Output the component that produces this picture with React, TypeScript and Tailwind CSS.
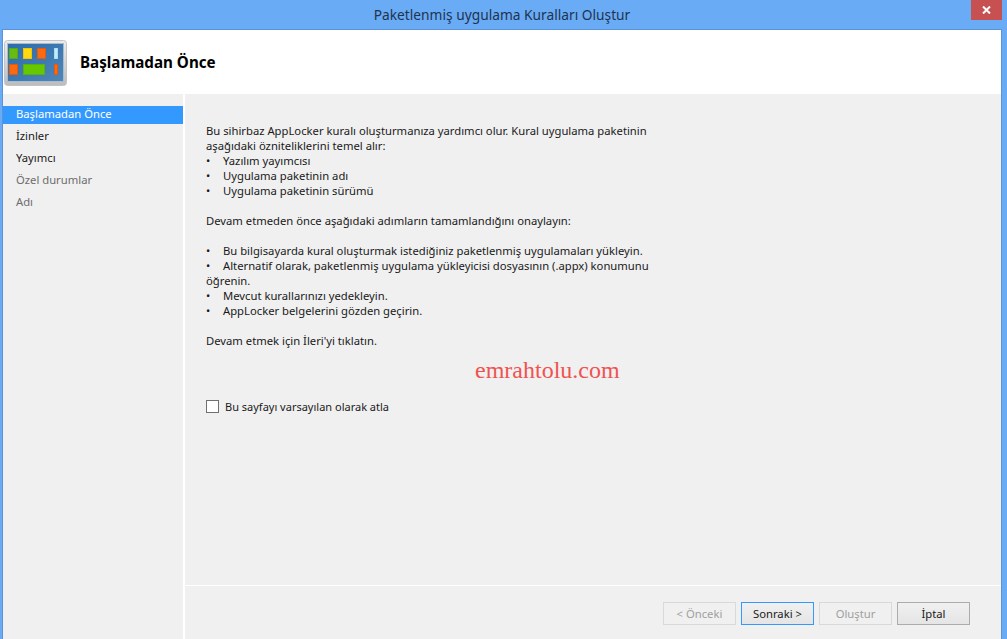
const font = { fontFamily: '"Noto Sans", sans-serif' };

function Tile({ x, y, w, h, fill, edge }: { x: number; y: number; w: number; h: number; fill: string; edge: string }) {
  return <rect x={x + 0.5} y={y + 0.5} width={w - 1} height={h - 1} fill={fill} stroke={edge} />;
}

function AppIcon() {
  return (
    <svg width="63" height="46" viewBox="0 0 63 46" className="shrink-0">
      <defs>
        <linearGradient id="frame" x1="0" y1="0" x2="0" y2="1">
          <stop offset="0" stopColor="#ececec" />
          <stop offset="1" stopColor="#bcbcbc" />
        </linearGradient>
        <linearGradient id="panel" x1="0" y1="0" x2="1" y2="1">
          <stop offset="0" stopColor="#2a6cab" />
          <stop offset="1" stopColor="#4f86b8" />
        </linearGradient>
      </defs>
      <rect x="0.5" y="0.5" width="62" height="45" rx="3" fill="url(#frame)" stroke="#c4c4c4" />
      <rect x="3.5" y="3.5" width="56" height="38" fill="url(#panel)" stroke="#a9bccd" />
      <Tile x={5} y={8} w={9} h={11} fill="#66bb14" edge="#5aa80f" />
      <Tile x={19} y={8} w={9} h={11} fill="#ffd90f" edge="#f2c400" />
      <Tile x={33} y={8} w={9} h={11} fill="#f96a12" edge="#e55a0a" />
      <Tile x={50} y={8} w={4} h={11} fill="#c4ebf9" edge="#a8dcf2" />
      <Tile x={5} y={24} w={9} h={11} fill="#f96a12" edge="#e55a0a" />
      <Tile x={19} y={24} w={22} h={11} fill="#66c800" edge="#5ab400" />
      <Tile x={50} y={24} w={4} h={11} fill="#f96a12" edge="#e55a0a" />
    </svg>
  );
}

function NavItem({ label, active, muted }: { label: string; active?: boolean; muted?: boolean }) {
  return (
    <div
      className={`pl-[13px] text-[11.25px] ${
        active
          ? "bg-[#3399ff] text-white h-[18px] leading-[16px] mb-[4px]"
          : muted
            ? "h-[22px] leading-[16px] text-[#6d6d6d]"
            : "h-[22px] leading-[16px] text-[#1a1a1a]"
      }`}
    >
      {label}
    </div>
  );
}

function WizButton({ label, state }: { label: string; state: "disabled" | "primary" | "normal" }) {
  const cls =
    state === "disabled"
      ? "border-[#d9d9d9] bg-[#f0f0f0] text-[#a0a0a0]"
      : state === "primary"
        ? "border-[#3399ff] bg-linear-to-b from-[#f0f0f0] to-[#e5e5e5] text-[#1a1a1a]"
        : "border-[#acacac] bg-linear-to-b from-[#f0f0f0] to-[#e5e5e5] text-[#1a1a1a]";
  return (
    <div className={`w-[73px] h-[23px] border flex items-center justify-center text-[11.25px] pt-[1px] ${cls}`}>
      {label}
    </div>
  );
}

function Bullet({ children }: { children: string }) {
  return (
    <div className="flex">
      <span className="w-[17px] shrink-0">•</span>
      <span>{children}</span>
    </div>
  );
}

export default function App() {
  return (
    <div style={font} className="w-[1007px] h-[639px] overflow-hidden bg-[#6aabf5] flex flex-col">
      {/* title bar */}
      <div className="h-[29px] shrink-0 flex items-start">
        <div className="flex-1 text-center text-[13.75px] leading-[29px] text-[#1f3350] pl-[33px]">
          Paketlenmiş uygulama Kuralları Oluştur
        </div>
        <div className="w-[31px] h-[20px] mr-[5px] bg-[#c75050] flex items-center justify-center">
          <svg width="9" height="8" viewBox="0 0 9 8">
            <path d="M1 0.5 L8 7.5 M8 0.5 L1 7.5" stroke="#fff" strokeWidth="2" />
          </svg>
        </div>
      </div>

      {/* window body */}
      <div className="flex-1 ml-[2px] mr-[5px] border-t border-l border-r border-[#5b93d6] bg-white flex flex-col min-h-0">
        <div className="h-[64px] shrink-0 bg-white flex items-start">
          <div className="ml-[1px] mt-[10px]">
            <AppIcon />
          </div>
          <div className="ml-[13px] mt-[22px] leading-[20px] font-bold text-[15.2px] text-black">Başlamadan Önce</div>
        </div>

        <div className="flex-1 flex min-h-0">
          {/* sidebar */}
          <div className="w-[180px] shrink-0 bg-[#f0f0f0] pt-[12px]">
            <NavItem label="Başlamadan Önce" active />
            <NavItem label="İzinler" />
            <NavItem label="Yayımcı" />
            <NavItem label="Özel durumlar" muted />
            <NavItem label="Adı" muted />
          </div>

          <div className="w-[2px] shrink-0 bg-white" />

          {/* content */}
          <div className="flex-1 flex flex-col bg-[#f0f0f0] min-w-0">
            <div className="flex-1 pl-[21px] pt-[29px] text-[11.25px] leading-[15px] text-[#1a1a1a]">
              <p>Bu sihirbaz AppLocker kuralı oluşturmanıza yardımcı olur. Kural uygulama paketinin</p>
              <p>aşağıdaki özniteliklerini temel alır:</p>
              <Bullet>Yazılım yayımcısı</Bullet>
              <Bullet>Uygulama paketinin adı</Bullet>
              <Bullet>Uygulama paketinin sürümü</Bullet>
              <p className="mt-[15px]">Devam etmeden önce aşağıdaki adımların tamamlandığını onaylayın:</p>
              <div className="h-[15px]" />
              <Bullet>Bu bilgisayarda kural oluşturmak istediğiniz paketlenmiş uygulamaları yükleyin.</Bullet>
              <Bullet>Alternatif olarak, paketlenmiş uygulama yükleyicisi dosyasının (.appx) konumunu</Bullet>
              <p>öğrenin.</p>
              <Bullet>Mevcut kurallarınızı yedekleyin.</Bullet>
              <Bullet>AppLocker belgelerini gözden geçirin.</Bullet>
              <p className="mt-[15px]">Devam etmek için İleri'yi tıklatın.</p>
              <div
                style={{ fontFamily: '"Liberation Serif", serif' }}
                className="mt-[9px] ml-[269px] text-[24px] leading-[26px] text-[#ef5350]"
              >
                emrahtolu.com
              </div>
              <div className="mt-[16px] flex items-center h-[14px]">
                <div className="w-[13px] h-[13px] border border-[#707070] bg-white" />
                <span className="ml-[6px] text-[11px] text-[#1a1a1a]">Bu sayfayı varsayılan olarak atla</span>
              </div>
            </div>

            <div className="h-[1px] bg-white shrink-0" />
            <div className="h-[53px] shrink-0 flex items-start justify-end gap-[5px] pt-[16px] pr-[31px]">
              <WizButton label="< Önceki" state="disabled" />
              <WizButton label="Sonraki >" state="primary" />
              <WizButton label="Oluştur" state="disabled" />
              <WizButton label="İptal" state="normal" />
            </div>
          </div>
        </div>
      </div>
    </div>
  );
}
